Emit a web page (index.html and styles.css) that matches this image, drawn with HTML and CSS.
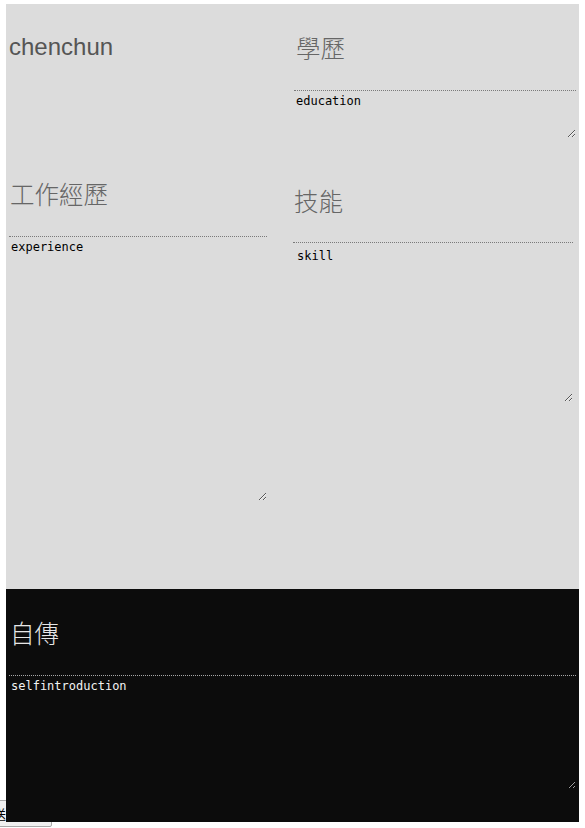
FILE: index.html
```html
<!DOCTYPE html>
<html lang="zh-Hant">
<head>
<meta charset="utf-8">
<title>chenchun</title>
<link rel="stylesheet" href="styles.css">
</head>
<body>
<div class="page">
  <div class="resume">
    <div class="col left">
      <h1 class="name">chenchun</h1>
      <section class="block exp">
        <h2 class="title">工作經歷</h2>
        <textarea class="field">experience</textarea>
      </section>
    </div>
    <div class="col right">
      <section class="block edu">
        <h2 class="title">學歷</h2>
        <textarea class="field">education</textarea>
      </section>
      <section class="block skill">
        <h2 class="title">技能</h2>
        <textarea class="field">skill</textarea>
      </section>
    </div>
  </div>
  <section class="bio">
    <h2 class="title">自傳</h2>
    <textarea class="field">selfintroduction</textarea>
  </section>
</div>
<button class="submit" type="button">送出</button>
</body>
</html>
```
FILE: styles.css
```css
html, body {
  margin: 0;
  padding: 0;
  background: #ffffff;
}

body {
  position: relative;
  height: 828px;
  overflow: hidden;
  font-family: "Liberation Sans", "Noto Sans CJK TC", sans-serif;
}

.page {
  position: relative;
  z-index: 1;
  margin: 4px 0 0 6px;
  width: 573px;
}

.resume {
  display: flex;
  background: #dcdcdc;
  height: 585px;
}

.col {
  display: flex;
  flex-direction: column;
}

.left {
  width: 284px;
}

.right {
  flex: 1;
}

.name {
  margin: 29px 0 0 3px;
  font-size: 24px;
  line-height: 28px;
  font-weight: normal;
  color: #555555;
}

.title {
  margin: 0;
  font-family: "Noto Sans CJK TC", "Liberation Sans", sans-serif;
  font-size: 24.5px;
  line-height: 30px;
  font-weight: 300;
  color: #666666;
}

.field {
  display: block;
  box-sizing: border-box;
  margin: 27px 0 0 0;
  padding: 3px 2px 2px 2px;
  border: none;
  border-top: 1px dotted #7a7a7a;
  background: transparent;
  color: #000000;
  font-family: "DejaVu Sans Mono", "Liberation Mono", monospace;
  font-size: 12px;
  line-height: 14px;
  resize: both;
  outline: none;
}

/* left column */
.exp {
  margin-top: 118px;
}

.exp .title {
  margin-left: 4px;
}

.exp .field {
  margin-left: 3px;
  width: 258px;
  height: 265px;
}

/* right column */
.edu {
  margin-top: 29px;
}

.edu .title {
  margin-left: 6px;
}

.edu .field {
  margin-left: 4px;
  width: 282px;
  height: 48px;
}

.skill {
  margin-top: 48px;
}

.skill .title {
  margin-left: 4px;
}

.skill .field {
  margin-top: 26px;
  margin-left: 3px;
  width: 280px;
  height: 160px;
  padding: 6px 4px 4px 4px;
}

/* biography */
.bio {
  background: #0c0c0c;
  height: 233px;
  padding-top: 29px;
  box-sizing: border-box;
}

.bio .title {
  margin-left: 4px;
  color: #e6e6e6;
}

.bio .field {
  margin-left: 3px;
  width: 567px;
  height: 114px;
  color: #f2f2f2;
  border-top-color: #a8a8a8;
}

.submit {
  position: absolute;
  z-index: 0;
  left: -16px;
  top: 800px;
  width: 68px;
  height: 27px;
  box-sizing: border-box;
  padding: 0 0 0 8px;
  text-align: left;
  border: 1px solid #a9a9a9;
  border-radius: 2px;
  background: #f0f0f0;
  color: #000000;
  font-family: "Noto Sans CJK TC", sans-serif;
  font-size: 13px;
}
```
